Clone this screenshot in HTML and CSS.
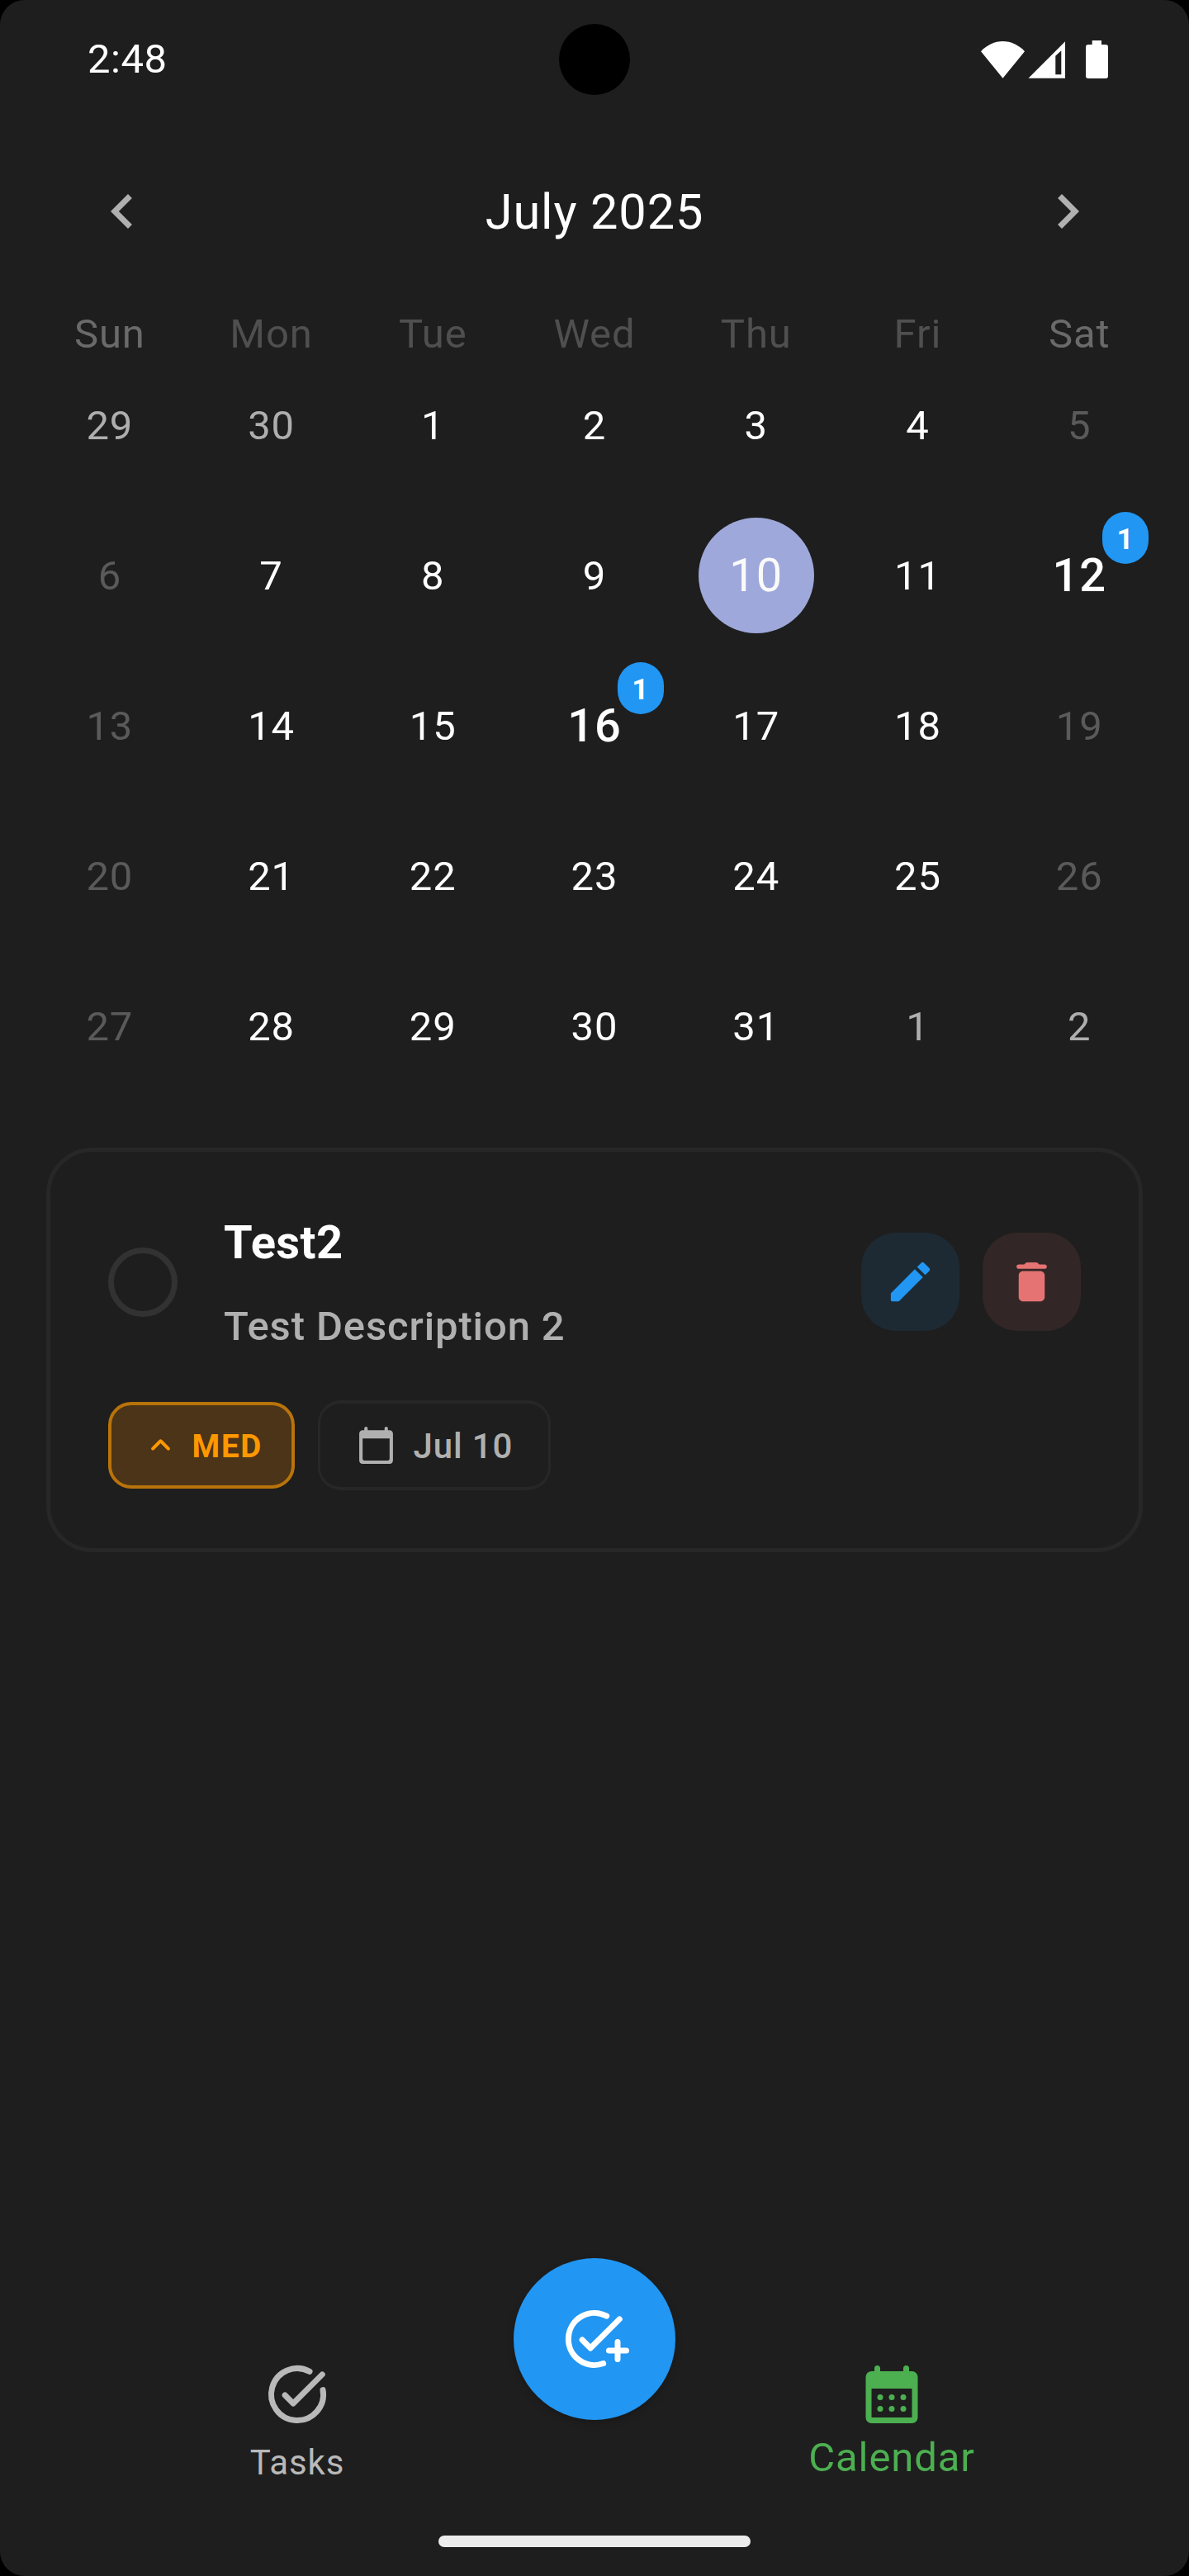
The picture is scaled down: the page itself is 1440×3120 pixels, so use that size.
FILE: index.html
```html
<!DOCTYPE html>
<html lang="en">
<head>
<meta charset="utf-8">
<title>Calendar</title>
<link rel="stylesheet" href="styles.css">
</head>
<body>
<div class="screen">
  <header class="status-bar">
    <span class="clock">2:48</span>
    <span class="camera"></span>
    <svg class="status-icons" viewBox="0 0 155 46" width="155" height="46">
      <path d="M26.500 45.700L0 13.200C7.500 5.500 16.500 1.100 26.500 1.100s19 4.400 26.500 12.100z"/>
      <path fill-rule="evenodd" d="M57.500 45.700L102 1.300v44.400zM90.300 41.300h7V12.200l-7 6.500z"/>
      <path d="M134.700 0H146v5h5a3 3 0 0 1 3 3v35a3 3 0 0 1-3 3h-21a3 3 0 0 1-3-3V8a3 3 0 0 1 3-3h4.700z"/>
    </svg>
  </header>

  <main class="calendar">
    <div class="month-bar">
      <svg class="chevron" viewBox="0 0 24 24"><path d="M15.410 7.410L14 6l-6 6 6 6 1.410-1.410L10.830 12z"/></svg>
      <h1 class="month">July 2025</h1>
      <svg class="chevron" viewBox="0 0 24 24"><path d="M10 6L8.590 7.410 13.170 12l-4.580 4.590L10 18l6-6z"/></svg>
    </div>
    <div class="weekdays">
      <span class="rest">Sun</span><span>Mon</span><span>Tue</span><span>Wed</span><span>Thu</span><span>Fri</span><span class="rest">Sat</span>
    </div>
    <div class="days">
      <span class="outside">29</span><span class="outside">30</span><span>1</span><span>2</span><span>3</span><span>4</span><span class="weekend">5</span>
      <span class="weekend">6</span><span>7</span><span>8</span><span>9</span><span class="today"><b class="disc">10</b></span><span>11</span><span class="busy">12<i class="count">1</i></span>
      <span class="weekend">13</span><span>14</span><span>15</span><span class="busy">16<i class="count">1</i></span><span>17</span><span>18</span><span class="weekend">19</span>
      <span class="weekend">20</span><span>21</span><span>22</span><span>23</span><span>24</span><span>25</span><span class="weekend">26</span>
      <span class="weekend">27</span><span>28</span><span>29</span><span>30</span><span>31</span><span class="outside">1</span><span class="outside">2</span>
    </div>
  </main>

  <article class="task">
    <div class="task-head">
      <span class="check"></span>
      <div class="task-text">
        <h2 class="task-title">Test2</h2>
        <p class="task-desc">Test Description 2</p>
      </div>
      <div class="actions">
        <span class="action edit"><svg viewBox="0 0 24 24"><path d="M3 17.460v3.040c0 .28.22.5.5.5h3.040c.13 0 .26-.05.35-.15L17.810 9.940l-3.750-3.750L3.150 17.100c-.1.1-.15.22-.15.36zM20.710 7.040c.39-.39.39-1.020 0-1.410l-2.340-2.340c-.39-.39-1.020-.39-1.410 0l-1.830 1.830 3.750 3.750 1.830-1.830z"/></svg></span>
        <span class="action delete"><svg viewBox="0 0 24 24"><path d="M6 19c0 1.100.9 2 2 2h8c1.100 0 2-.9 2-2V9c0-1.100-.9-2-2-2H8c-1.100 0-2 .9-2 2v10zM18 4h-2.500l-.71-.71c-.18-.18-.44-.29-.7-.29H9.910c-.26 0-.52.11-.7.29L8.500 4H6c-.55 0-1 .45-1 1s.45 1 1 1h12c.55 0 1-.45 1-1s-.45-1-1-1z"/></svg></span>
      </div>
    </div>
    <div class="chips">
      <span class="chip priority"><svg viewBox="0 0 24 24"><path d="M8.120 14.710L12 10.830l3.880 3.880c.39.39 1.020.39 1.410 0 .39-.39.39-1.020 0-1.410L12.700 8.710c-.39-.39-1.020-.39-1.410 0L6.700 13.300c-.39.39-.39 1.020 0 1.410.39.38 1.030.39 1.420 0z"/></svg><span class="chip-label">MED</span></span>
      <span class="chip due"><svg viewBox="0 0 24 24"><path d="M20 3h-1V2c0-.55-.45-1-1-1s-1 .45-1 1v1H7V2c0-.55-.45-1-1-1s-1 .45-1 1v1H4c-1.100 0-2 .9-2 2v16c0 1.100.9 2 2 2h16c1.100 0 2-.9 2-2V5c0-1.100-.9-2-2-2zm-1 18H5c-.55 0-1-.45-1-1V8h16v12c0 .55-.45 1-1 1z"/></svg><span class="chip-label">Jul 10</span></span>
    </div>
  </article>

  <nav class="tabs">
    <div class="tab">
      <svg class="line" viewBox="0 0 24 24"><path d="M16.300 4.100A9 9 0 1 0 20.870 10.450M7.750 12.300l2.850 2.850L20.650 5.100"/></svg>
      <span>Tasks</span>
    </div>
    <div class="add">
      <svg class="line" viewBox="0 0 24 24"><path d="M16.200 4.050A9 9 0 1 0 15.050 20.450M7.750 12.300l2.850 2.850L20.650 5.100M20 13v6M17 16h6"/></svg>
    </div>
    <div class="tab active">
      <svg viewBox="0 0 24 24"><path fill-rule="evenodd" d="M6 4V3a1 1 0 0 1 2 0v1h8V3a1 1 0 0 1 2 0v1h1a2 2 0 0 1 2 2v14a2 2 0 0 1-2 2H5a2 2 0 0 1-2-2V6a2 2 0 0 1 2-2zM5 10v10h14V10z"/><circle cx="8" cy="13" r="1"/><circle cx="12" cy="13" r="1"/><circle cx="16" cy="13" r="1"/><circle cx="8" cy="17" r="1"/><circle cx="12" cy="17" r="1"/><circle cx="16" cy="17" r="1"/></svg>
      <span>Calendar</span>
    </div>
  </nav>
  <div class="home-bar"></div>
</div>
</body>
</html>
```
FILE: styles.css
```css
* { box-sizing: border-box; }
body { margin: 0; background: #000; }
svg { display: block; fill: currentColor; flex: none; }
.screen {
  width: 1440px; height: 3120px; overflow: hidden;
  display: flex; flex-direction: column;
  background: #1e1e1e; border-radius: 30px; color: #fff;
  font-family: Roboto, sans-serif; letter-spacing: .875px;
}
.status-bar {
  height: 144px; padding: 0 97px;
  display: grid; grid-template-columns: 1fr 86px 1fr; align-items: center;
}
.clock { margin-left: 9px; font-size: 49px; line-height: 58px; letter-spacing: .5px; }
.camera { width: 86px; height: 86px; border-radius: 50%; background: #000; }
.status-icons { justify-self: end; }

.calendar { height: 1190px; padding: 0 35px; }
.month-bar {
  height: 224px; padding: 0 70.500px;
  display: flex; align-items: center; justify-content: space-between;
}
.chevron { width: 84px; height: 84px; color: #b0b0b0; }
.month { margin: 0; padding-top: 2px; font-size: 59.500px; font-weight: 400; }
.weekdays, .days { display: grid; grid-template-columns: repeat(7, 1fr); text-align: center; }
.weekdays { height: 56px; line-height: 73px; font-size: 49px; color: #4f4f4f; }
.weekdays .rest { color: #6a6a6a; }
.days { grid-auto-rows: 182px; font-size: 49px; line-height: 184px; }
.days > span { position: relative; }
.days .outside { color: #aeaeae; }
.days .weekend { color: #5a5a5a; }
.days .busy { font-size: 56px; line-height: 182px; font-weight: 500; }
.today { display: grid; place-items: center; }
.days .disc {
  width: 140px; height: 140px; border-radius: 50%; line-height: 140px;
  background: #9fa8da; color: #fafafa; font-size: 56px; font-weight: 400;
}
.count {
  position: absolute; top: 14px; right: 14px; width: 56px; height: 63px;
  border-radius: 28px; background: #2196f3;
  font: bold 35px/67px Roboto, sans-serif;
}

.task {
  height: 490px; margin: 56px 56px 0; padding: 70px;
  border: 5px solid #272727; border-radius: 56px;
}
.task-head { display: flex; align-items: center; height: 175px; }
.check { width: 84px; height: 84px; border: 7px solid #323232; border-radius: 50%; }
.task-text { flex: 1; margin-left: 56px; padding-top: 5px; }
.task-title { margin: 0; font-size: 56px; line-height: 73px; font-weight: 700; letter-spacing: .450px; }
.task-desc { margin: 30px 0 0; font-size: 49px; line-height: 69px; font-weight: 500; color: #b0b0b0; }
.actions { display: flex; gap: 28px; }
.action { width: 119px; height: 119px; border-radius: 42px; display: grid; place-items: center; }
.action svg { width: 63px; height: 63px; }
.edit { background: #1e2a33; color: #2196f3; }
.delete { background: #332626; color: #e57373; }
.chips { display: flex; align-items: center; gap: 28px; margin-top: 56px; }
.chip { display: flex; align-items: center; border: 4px solid; border-radius: 28px; }
.chip svg { width: 49px; height: 49px; }
.chip-label { padding-top: 2px; }
.priority {
  width: 226px; height: 105px; padding-left: 34.500px; gap: 14px;
  background: #4b3417; border-color: #b8730b; color: #ff9800;
  font-size: 38.500px; font-weight: 700; letter-spacing: 1.750px;
}
.due {
  width: 282px; height: 109px; padding-left: 42.500px; gap: 21px;
  border-width: 4px 3px; border-color: #272727; color: #b0b0b0;
  font-size: 42px; font-weight: 500;
}

.tabs {
  height: 280px; margin-top: 855px; padding: 0 180px;
  display: grid; grid-template-columns: 360px 360px 360px; justify-items: center;
}
.tab { padding-top: 123px; display: flex; flex-direction: column; align-items: center; color: #b9b9b9; font-size: 42px; }
.tab svg, .add svg { width: 84px; height: 84px; }
.tab span { line-height: 50px; margin-top: 16px; }
.tab.active { color: #4caf50; font-size: 49px; }
.tab.active span { line-height: 58px; margin-top: 6px; }
.line { fill: none; stroke: currentColor; stroke-width: 2; stroke-linecap: round; stroke-linejoin: round; }
.add {
  width: 196px; height: 196px; border-radius: 50%; background: #2196f3;
  display: grid; place-items: center; box-shadow: 0 4px 10px rgba(0, 0, 0, .18);
}
.home-bar { width: 378px; height: 14px; margin: 56px auto 0; border-radius: 7px; background: #ececec; }
```
